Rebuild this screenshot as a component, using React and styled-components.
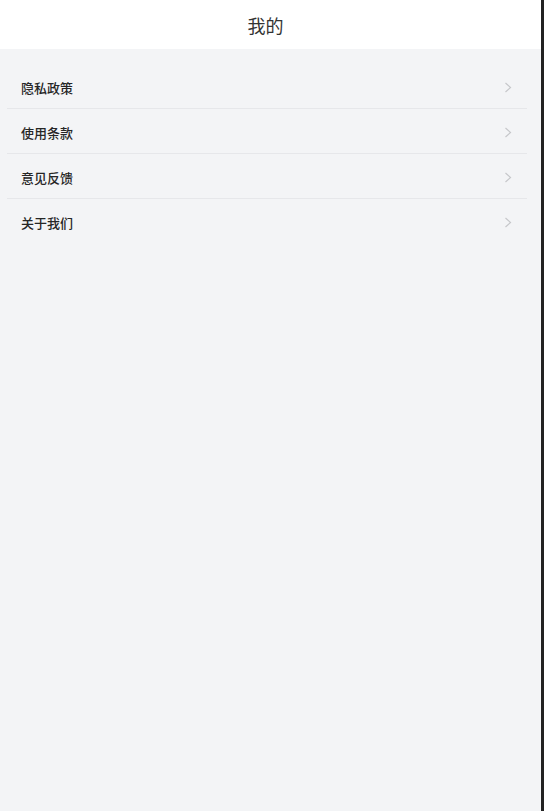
import React from "react";
import styled, { createGlobalStyle } from "styled-components";

const GlobalStyle = createGlobalStyle`
  html, body {
    margin: 0;
    padding: 0;
    height: 100%;
    background: #222;
  }
  #root {
    height: 100%;
  }
  * {
    box-sizing: border-box;
  }
`;

const Page = styled.div`
  width: 541px;
  height: 811px;
  background: #f3f4f6;
  font-family: "Noto Sans CJK SC", "Noto Sans", sans-serif;
  color: #323233;
  display: flex;
  flex-direction: column;
`;

const NavBar = styled.header`
  height: 49px;
  background: #fff;
  display: flex;
  align-items: center;
  justify-content: center;
  padding-right: 10px;
  h1 {
    margin: 0;
    font-size: 18px;
    font-weight: 400;
    line-height: 1;
    color: #333;
  }
`;

const List = styled.ul`
  list-style: none;
  margin: 0;
  padding: 15px 14px 0 7px;
`;

const Row = styled.li`
  height: 45px;
  display: flex;
  align-items: flex-start;
  justify-content: space-between;
  padding: 13px 15px 0 14px;
  border-bottom: 1px solid ${(p) => (p.$last ? "transparent" : "#e6e7ea")};
  font-size: 13px;
  font-weight: 500;
  line-height: 21px;
  color: #262626;
  cursor: pointer;
`;

const Chevron = styled.svg`
  width: 8px;
  height: 11px;
  margin-top: 5px;
`;

const items = ["隐私政策", "使用条款", "意见反馈", "关于我们"];

const Arrow = () => (
  <Chevron viewBox="0 0 8 11">
    <path d="M1.5 1 L6.5 5.5 L1.5 10" fill="none" stroke="#c6c7ca" strokeWidth="1.2" />
  </Chevron>
);

export default function App() {
  return (
    <>
      <GlobalStyle />
      <Page>
        <NavBar>
          <h1>我的</h1>
        </NavBar>
        <List>
          {items.map((t, i) => (
            <Row key={t} $last={i === items.length - 1}>
              <span>{t}</span>
              <Arrow />
            </Row>
          ))}
        </List>
      </Page>
    </>
  );
}
